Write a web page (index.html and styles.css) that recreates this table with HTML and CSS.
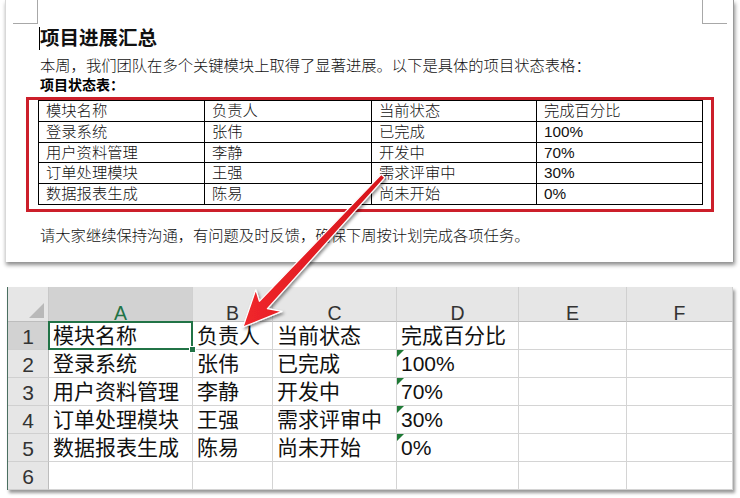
FILE: index.html
```html
<!DOCTYPE html>
<html lang="zh-CN">
<head>
<meta charset="utf-8">
<title>项目进展汇总</title>
<link rel="stylesheet" href="styles.css">
</head>
<body>
<div class="page">
  <section class="doc">
    <span class="crop crop-tl"></span>
    <span class="crop crop-tr"></span>
    <h1 class="title">项目进展汇总</h1>
    <p class="para">本周，我们团队在多个关键模块上取得了显著进展。以下是具体的项目状态表格：</p>
    <p class="label">项目状态表：</p>
    <div class="redbox">
      <table class="wtable">
        <colgroup><col class="c1"><col class="c2"><col class="c3"><col class="c4"></colgroup>
        <tr><td>模块名称</td><td>负责人</td><td>当前状态</td><td>完成百分比</td></tr>
        <tr><td>登录系统</td><td>张伟</td><td>已完成</td><td>100%</td></tr>
        <tr><td>用户资料管理</td><td>李静</td><td>开发中</td><td>70%</td></tr>
        <tr><td>订单处理模块</td><td>王强</td><td>需求评审中</td><td>30%</td></tr>
        <tr><td>数据报表生成</td><td>陈易</td><td>尚未开始</td><td>0%</td></tr>
      </table>
    </div>
    <p class="para closing">请大家继续保持沟通，有问题及时反馈，确保下周按计划完成各项任务。</p>
  </section>

  <section class="sheet">
    <div class="corner"><span class="tri"></span></div>
    <div class="hd sel">A</div><div class="hd">B</div><div class="hd">C</div><div class="hd">D</div><div class="hd">E</div><div class="hd">F</div>

    <div class="rh sel">1</div>
    <div class="cell active">模块名称</div><div class="cell">负责人</div><div class="cell">当前状态</div><div class="cell">完成百分比</div><div class="cell"></div><div class="cell"></div>

    <div class="rh">2</div>
    <div class="cell">登录系统</div><div class="cell">张伟</div><div class="cell">已完成</div><div class="cell flag">100%</div><div class="cell"></div><div class="cell"></div>

    <div class="rh">3</div>
    <div class="cell">用户资料管理</div><div class="cell">李静</div><div class="cell">开发中</div><div class="cell flag">70%</div><div class="cell"></div><div class="cell"></div>

    <div class="rh">4</div>
    <div class="cell">订单处理模块</div><div class="cell">王强</div><div class="cell">需求评审中</div><div class="cell flag">30%</div><div class="cell"></div><div class="cell"></div>

    <div class="rh">5</div>
    <div class="cell">数据报表生成</div><div class="cell">陈易</div><div class="cell">尚未开始</div><div class="cell flag">0%</div><div class="cell"></div><div class="cell"></div>

    <div class="rh">6</div>
    <div class="cell"></div><div class="cell"></div><div class="cell"></div><div class="cell"></div><div class="cell"></div><div class="cell"></div>
  </section>

  <svg class="arrow" width="740" height="498" viewBox="0 0 740 498" aria-hidden="true">
    <defs>
      <filter id="sh" x="-20%" y="-20%" width="140%" height="140%">
        <feDropShadow dx="1.5" dy="2" stdDeviation="1.5" flood-color="#000" flood-opacity="0.45"/>
      </filter>
      <linearGradient id="rg" x1="0" y1="0" x2="1" y2="0">
        <stop offset="0" stop-color="#f0262b"/>
        <stop offset="1" stop-color="#d6151c"/>
      </linearGradient>
    </defs>
    <polygon filter="url(#sh)" fill="url(#rg)" stroke="#ffffff" stroke-width="1.2" stroke-linejoin="round"
      points="243,327 255.8,289.7 259.4,301.3 381.3,174.3 384.9,177.7 267.4,308.7 282,311.4"/>
  </svg>
</div>
</body>
</html>
```

FILE: styles.css
```css
html, body {
  margin: 0;
  padding: 0;
  background: #ffffff;
}

.page {
  position: relative;
  width: 740px;
  height: 498px;
  overflow: hidden;
  font-family: "Liberation Sans", "Noto Sans CJK SC", sans-serif;
  color: #000;
}

/* ---------- Word document ---------- */
.doc {
  position: relative;
  margin-left: 5px;
  width: 729px;
  height: 262px;
  box-sizing: border-box;
  padding: 26px 0 0 20px;
  background: #fff;
  border-left: 1px solid #d8d8d8;
  border-right: 1px solid #9a9a9a;
  box-shadow: 1px 3px 4px rgba(0, 0, 0, 0.45);
}

.crop {
  position: absolute;
  top: 0;
  width: 24px;
  height: 23px;
  border-bottom: 1px solid #a8a8a8;
}
.crop-tl {
  left: 7px;
  border-right: 1px solid #a8a8a8;
}
.crop-tr {
  left: 696px;
  border-left: 1px solid #a8a8a8;
}

.title {
  position: relative;
  margin: 0 0 0 14px;
  font-size: 19.5px;
  line-height: 24px;
  font-weight: bold;
  color: #111;
}
.title::before {
  content: "";
  position: absolute;
  left: -1px;
  top: 1px;
  width: 1px;
  height: 23px;
  background: #000;
}

.para {
  margin: 6px 0 0 14px;
  font-size: 15.3px;
  line-height: 20px;
  font-weight: 300;
  color: #111;
}

.label {
  margin: 0 0 0 14px;
  font-size: 14px;
  line-height: 19px;
  font-weight: bold;
}

.redbox {
  margin-top: 2px;
  width: 688px;
  box-sizing: border-box;
  border: 3px solid #cc1f2a;
  padding: 0 9px 4px 9px;
}

.wtable {
  width: 664px;
  border-collapse: collapse;
  table-layout: fixed;
  font-size: 15.3px;
  font-weight: 300;
}
.wtable .c1 { width: 166px; }
.wtable .c2 { width: 167px; }
.wtable .c3 { width: 165px; }
.wtable .c4 { width: 166px; }
.wtable td {
  border: 1px solid #000;
  height: 19.8px;
  padding: 0 0 0 7px;
  line-height: 19.8px;
  white-space: nowrap;
  color: #111;
}

.closing {
  margin-top: 14px;
}

/* ---------- Excel sheet ---------- */
.sheet {
  margin: 25px 0 0 7px;
  width: 726px;
  box-sizing: border-box;
  border-left: 1px solid #4a6f60;
  display: grid;
  grid-template-columns: 41px 144px 80px 124px 122px 108px 106px;
  grid-template-rows: 35px repeat(6, 28px);
  background: #fff;
  box-shadow: 2px 3px 3px rgba(0, 0, 0, 0.4);
}

.corner {
  position: relative;
  background: #e6e6e6;
  border-right: 1px solid #c8c8c8;
  border-bottom: 1px solid #bdbdbd;
}
.tri {
  position: absolute;
  right: 4px;
  bottom: 3px;
  width: 0;
  height: 0;
  border-left: 15px solid transparent;
  border-bottom: 15px solid #b9b9b9;
}

.hd {
  box-sizing: border-box;
  background: #e6e6e6;
  border-right: 1px solid #d0d0d0;
  border-bottom: 1px solid #bdbdbd;
  text-align: center;
  font-size: 19.5px;
  line-height: 22px;
  padding-top: 15px;
  color: #333;
}
.hd.sel {
  background: #d2d2d2;
  color: #217346;
}

.rh {
  box-sizing: border-box;
  background: #e6e6e6;
  border-right: 1px solid #bdbdbd;
  border-bottom: 1px solid #d0d0d0;
  text-align: center;
  font-size: 21px;
  line-height: 28px;
  padding-top: 1px;
  color: #333;
}
.rh.sel {
  background: #d2d2d2;
}

.cell {
  position: relative;
  box-sizing: border-box;
  border-right: 1px solid #d4d4d4;
  border-bottom: 1px solid #d4d4d4;
  font-size: 21px;
  line-height: 28px;
  padding-left: 4px;
  white-space: nowrap;
  color: #111;
}

.cell.active::after {
  content: "";
  position: absolute;
  left: -1px;
  top: -1px;
  right: -1px;
  bottom: -1px;
  border: 2px solid #217346;
}
.cell.active::before {
  content: "";
  position: absolute;
  right: -4px;
  bottom: -4px;
  width: 5px;
  height: 5px;
  background: #217346;
  border: 1px solid #fff;
  z-index: 1;
}

.cell.flag::before {
  content: "";
  position: absolute;
  left: 0;
  top: 0;
  width: 0;
  height: 0;
  border-top: 7px solid #1f7a36;
  border-right: 7px solid transparent;
}

/* ---------- arrow overlay ---------- */
.arrow {
  position: absolute;
  left: 0;
  top: 0;
  pointer-events: none;
}
```
